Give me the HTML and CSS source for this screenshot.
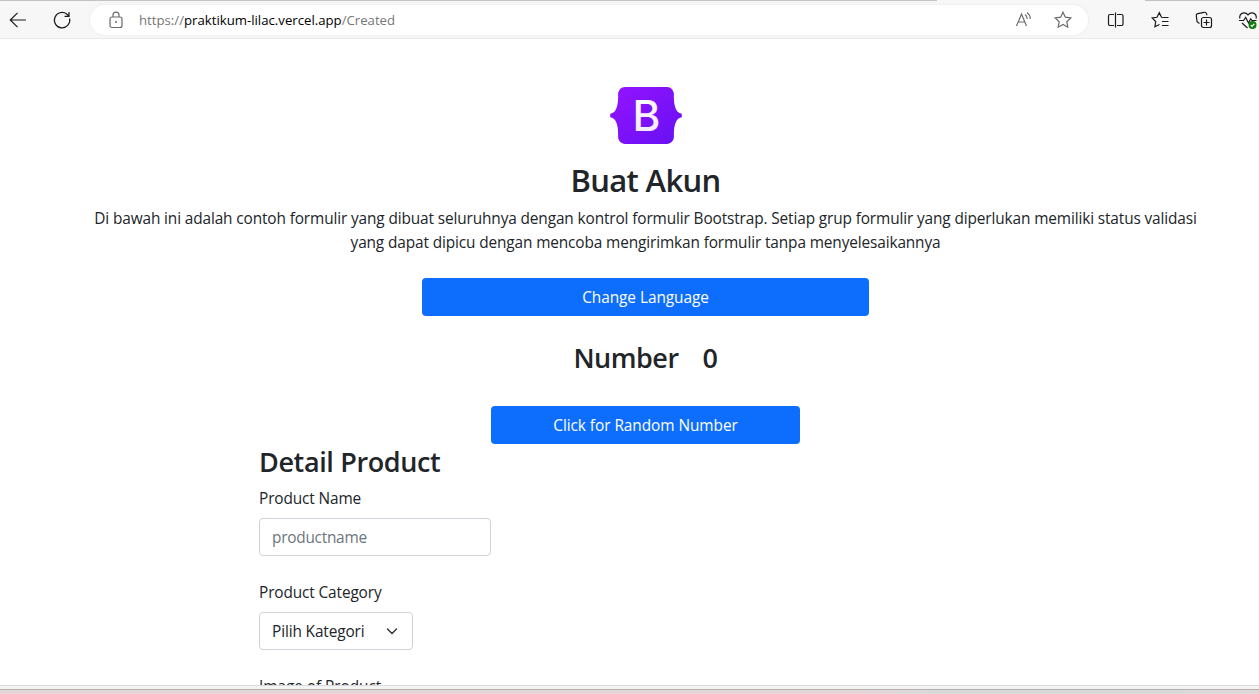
FILE: index.html
```html
<!DOCTYPE html>
<html lang="id">
<head>
<meta charset="utf-8">
<title>Buat Akun</title>
<link rel="stylesheet" href="styles.css">
</head>
<body>
<div class="window">
  <header class="toolbar">
    <svg class="icon back" viewBox="0 0 20 20"><path d="M18 10H2.5M9.5 2.8 2.3 10l7.2 7.2"/></svg>
    <svg class="icon reload" viewBox="0 0 20 20"><path d="M17.600 8.500A7.700 7.700 0 1 1 14.700 4L17 6M17 2v4.300h-4.500"/></svg>
    <div class="address">
      <svg class="icon lock" viewBox="0 0 20 20"><rect x="4" y="7" width="12" height="10.5" rx="2"/><path d="M7 7V5.2a3 3 0 0 1 6 0V7"/><circle class="dot" cx="10" cy="12" r="1"/></svg>
      <span class="url">https://<b>praktikum-lilac.vercel.app</b>/Created</span>
      <svg class="icon read" viewBox="0 0 20 20"><path d="m3.500 16 5-12 5 12M5.300 12h6.400M12 4.500q2.200 1.600 2.200 4.500M14 2.500q3.500 2.700 3.200 6.500"/></svg>
      <svg class="icon star" viewBox="0 0 20 20"><path d="m10 2.2 2.3 5 5.5.7-4 3.8 1 5.5-4.8-2.7-4.8 2.7 1-5.5-4-3.8 5.500-.7z"/></svg>
    </div>
    <svg class="icon split" viewBox="0 0 20 20"><path d="M8 4.500H4a1.500 1.500 0 0 0-1.500 1.500v8a1.500 1.500 0 0 0 1.500 1.500H8M11 4.500h4.500a1.500 1.500 0 0 1 1.500 1.500v8a1.500 1.500 0 0 1-1.500 1.500H11M9.500 2.500v15"/></svg>
    <svg class="icon favorites" viewBox="0 0 20 20"><path d="M13.500 7.500 11.500 7.300 9.300 2.700 7 7.300l-4.800.7 3.500 3.500-.8 5.200L9.500 14.500M11.500 7.500H18.500M12 11.500H18.500M12 15.500H18.500"/></svg>
    <svg class="icon collections" viewBox="0 0 20 20"><rect x="7.500" y="7.500" width="10" height="10" rx="2"/><path d="M12.500 9.500v6M9.500 12.500h6M5.500 13.500l-1.800-1.200a2 2 0 0 1-.8-2.200L2.300 6a2 2 0 0 1 1.400-2.300l6.500-1.400a2 2 0 0 1 2.300 1.400l.5 1.600"/></svg>
    <svg class="icon health" viewBox="0 0 20 20"><path d="M1.800 8.500C1 3 7 1 10 4.800c3-3.800 9-1.800 8.200 3.700M1 10.500h4.500l2.200-3 2.800 5.500 2.200-4.200 1.300 1.700h4.500M4 13l5.500 5"/><circle class="badge" cx="14.500" cy="15" r="4"/><path class="tick" d="m12.800 15.200 1.200 1.200 2.300-2.500"/></svg>
  </header>
  <main class="page">
    <div class="container">
      <section class="intro">
        <svg class="logo" viewBox="0 0 118 94">
          <defs>
            <linearGradient id="purple" x1="0" y1="0" x2="1" y2="1"><stop offset=".1" stop-color="#9013fe"/><stop offset="1" stop-color="#6610f2"/></linearGradient>
            <linearGradient id="letter" x1="0" y1="0" x2="0" y2="1"><stop stop-color="#fff"/><stop offset="1" stop-color="#f1e5fc"/></linearGradient>
          </defs>
          <path fill="url(#purple)" d="M24.509 0c-6.733 0-11.715 5.893-11.492 12.284.214 6.14-.064 14.092-2.066 20.577C8.943 39.365 5.547 43.485 0 44.014v5.972c5.547.529 8.943 4.649 10.951 11.153 2.002 6.485 2.28 14.437 2.066 20.577C12.794 88.106 17.776 94 24.51 94H93.500c6.733 0 11.714-5.893 11.491-12.284-.214-6.14.064-14.092 2.066-20.577 2.009-6.504 5.396-10.624 10.943-11.153v-5.972c-5.547-.529-8.934-4.649-10.943-11.153-2.002-6.484-2.280-14.437-2.066-20.577C105.214 5.894 100.233 0 93.500 0H24.508z"/>
          <text class="logo-letter" x="59.500" y="72" text-anchor="middle" fill="url(#letter)">B</text>
        </svg>
        <h1 class="title">Buat Akun</h1>
        <p class="lead">Di bawah ini adalah contoh formulir yang dibuat seluruhnya dengan kontrol formulir Bootstrap. Setiap grup formulir yang diperlukan memiliki status validasi<br>yang dapat dipicu dengan mencoba mengirimkan formulir tanpa menyelesaikannya</p>
        <button class="btn language">Change Language</button>
        <h2 class="counter"><span>Number</span><span>0</span></h2>
        <button class="btn random">Click for Random Number</button>
      </section>
      <form class="product">
        <h2 class="heading">Detail Product</h2>
        <label class="label">Product Name</label>
        <div class="field name-field">productname</div>
        <label class="label">Product Category</label>
        <div class="field select"><span>Pilih Kategori</span><svg class="chevron" viewBox="0 0 16 16"><path d="m2 4 6 6 6-6"/></svg></div>
        <label class="label image-label">Image of Product</label>
      </form>
    </div>
  </main>
  <footer class="edge"></footer>
</div>
</body>
</html>
```

FILE: styles.css
```css
* { box-sizing: border-box; }
body { margin: 0; font-family: "Open Sans", "Noto Sans", sans-serif; font-size: 15.4px; line-height: 24px; letter-spacing: -.125px; color: #212529; background: #fff; }
.window { width: 1259px; height: 694px; display: flex; flex-direction: column; overflow: hidden; }
.toolbar { flex: none; height: 39px; display: flex; align-items: center; padding-top: 1px; background: linear-gradient(90deg, #c3c3c3 937px, #f7f7f7 937px 1145px, #c3c3c3 1145px) top / 100% 1px no-repeat #f7f7f7; border-bottom: 1px solid #e9e9e9; }
.icon { flex: none; width: 20px; height: 20px; fill: none; stroke: #1b1b1b; stroke-width: 1.2; }
.back { margin-left: 8px; }
.reload { margin-left: 24px; }
.address { flex: none; width: 998px; height: 30px; margin-left: 18px; padding-left: 16px; display: flex; align-items: center; border-radius: 15px; background: #fff; box-shadow: 0 0 3px #e6e6e6; }
.address .icon { stroke: #6b6b6b; }
.lock .dot { fill: #6b6b6b; stroke: none; }
.url { margin-left: 13px; width: 874px; font-size: 13.2px; line-height: 18px; letter-spacing: 0; color: #767676; white-space: nowrap; }
.url b { font-weight: 400; color: #000; }
.star { margin-left: 20px; }
.split { margin-left: 18px; }
.favorites, .collections, .health { margin-left: 24px; }
.health .badge { fill: #107c10; stroke: none; }
.health .tick { stroke: #fff; }
.page { flex: none; height: 646px; overflow: hidden; }
.container { width: 1291px; }
.intro { display: flex; flex-direction: column; align-items: center; padding-top: 48px; }
.logo { width: 72px; height: 57px; display: block; }
.logo-letter { font: 500 70px Inter, sans-serif; }
.title { margin: 17px 0 8px; font-size: 31px; line-height: 38px; font-weight: 600; letter-spacing: -.65px; white-space: nowrap; }
.lead { margin: 0 0 23px; text-align: center; white-space: nowrap; }
.btn { display: block; height: 38px; padding: 2px 0 0; border: 0; border-radius: 4px; background: #0d6efd; color: #fff; font: inherit; letter-spacing: -.05px; }
.language { width: 447px; }
.counter { display: flex; gap: 24px; margin: 24px 0 31px; font-size: 27px; line-height: 35px; font-weight: 600; letter-spacing: -.5px; white-space: nowrap; }
.random { width: 309px; }
.product { display: flex; flex-direction: column; align-items: flex-start; padding-left: 259px; white-space: nowrap; }
.heading { margin: 1px 0 8px; font-size: 27px; line-height: 34px; font-weight: 600; letter-spacing: -.37px; }
.label { margin-bottom: 7px; }
.field { height: 38px; padding: 2px 12px 0; border: 1px solid #ced4da; border-radius: 4px; display: flex; align-items: center; margin-bottom: 25px; }
.name-field { width: 232px; color: #6c757d; letter-spacing: -.25px; }
.select { width: 154px; justify-content: space-between; padding-right: 14px; }
.image-label { letter-spacing: -.05px; }
.chevron { width: 12px; height: 12px; fill: none; stroke: #343a40; stroke-width: 2; stroke-linecap: round; stroke-linejoin: round; }
.edge { flex: none; height: 9px; border-top: 1px solid #dadada; background: linear-gradient(#f3f4f3 3px, #b5b0af 3px 4px, transparent 4px), linear-gradient(90deg, #e5d5d6 850px, #dad9da 930px 1180px, #dfd8d9); }
```
